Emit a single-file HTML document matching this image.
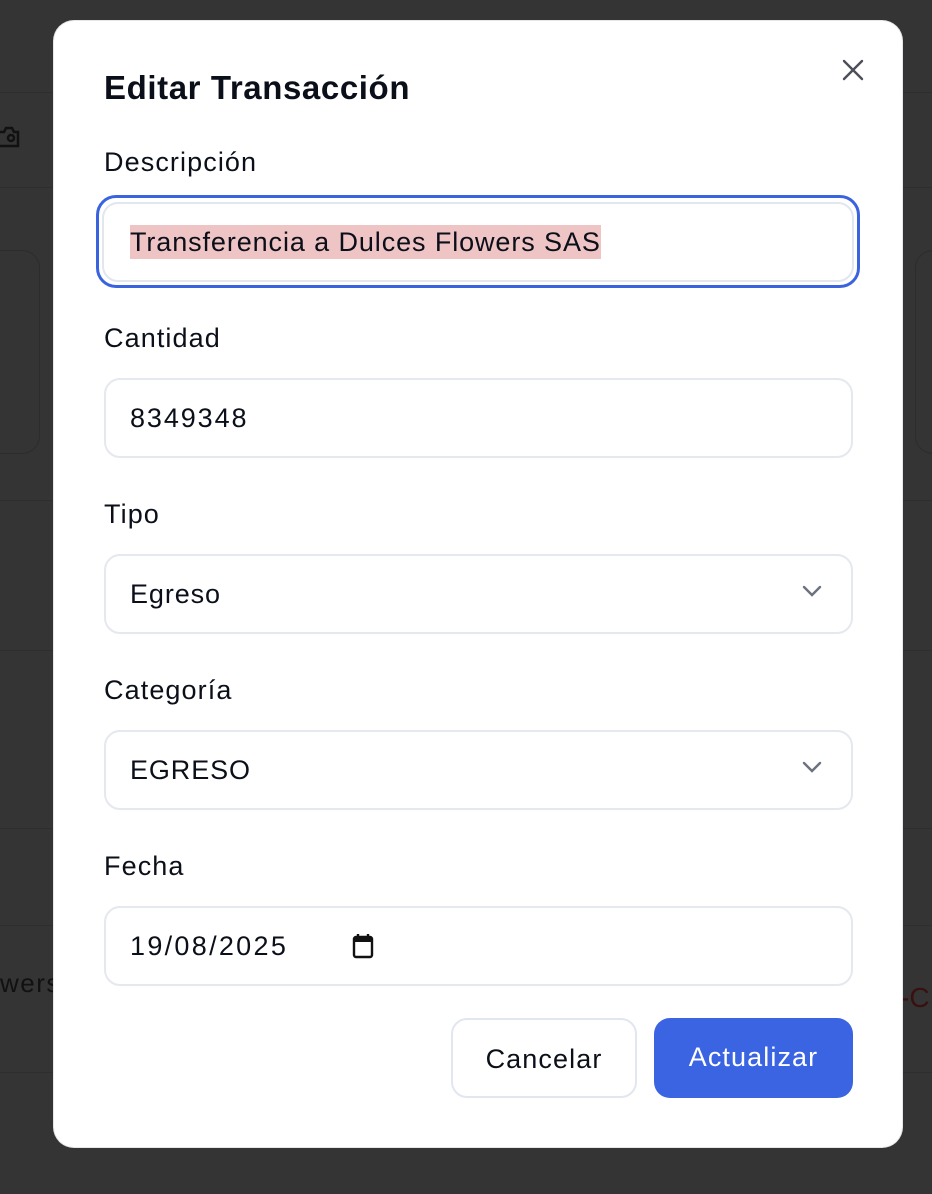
<!DOCTYPE html>
<html><head><meta charset="utf-8"><style>
*{box-sizing:border-box;margin:0;padding:0}
body{width:932px;height:1194px;background:#343434;font-family:"Liberation Sans",sans-serif;position:relative;overflow:hidden;color:#0b0f19}
.bgl{position:absolute;left:0;right:0;height:1px;background:#2e2e2e}
.modal{position:absolute;left:54px;top:21px;width:848px;height:1126px;background:#fff;border-radius:20px;box-shadow:0 0 0 1px #e3e6ea}
h1{position:absolute;left:50px;top:48px;font-size:33px;font-weight:bold;letter-spacing:0.6px}
.lab{position:absolute;left:50px;font-size:27px;color:#0b0f19;letter-spacing:1.1px}
.inp{position:absolute;left:50px;width:749px;height:80px;border:2px solid #e5e8ee;border-radius:16px;font-size:27px;padding-left:24px;line-height:76px;letter-spacing:0.9px}
.chev{position:absolute;right:28px;top:28px}
.x{position:absolute;left:786px;top:36px}
.btn{position:absolute;top:997px;height:80px;border-radius:16px;font-size:27px;text-align:center;line-height:78px;letter-spacing:1.1px}
</style></head><body>
<div class="bgl" style="top:92px"></div>
<div class="bgl" style="top:187px"></div>
<div class="bgl" style="top:500px"></div>
<div class="bgl" style="top:650px"></div>
<div class="bgl" style="top:828px"></div>
<div class="bgl" style="top:925px"></div>
<div class="bgl" style="top:1072px"></div>
<div style="position:absolute;left:-30px;top:250px;width:70px;height:204px;border:1px solid #2c2c2c;border-radius:18px"></div>
<div style="position:absolute;left:915px;top:250px;width:70px;height:204px;border:1px solid #2c2c2c;border-radius:18px"></div>
<div style="position:absolute;left:0;top:968px;font-size:26px;color:#111;letter-spacing:1.5px">wers</div>
<div style="position:absolute;left:900px;top:982px;font-size:28px;color:#3a0f0f;white-space:nowrap">-C</div>
<svg style="position:absolute;left:0;top:124px" width="26" height="28" viewBox="0 0 26 28"><path d="M-4 8h8l2-4h6l2 4h4v14H-4z" fill="none" stroke="#111" stroke-width="2.5"/><circle cx="11" cy="14" r="3" fill="none" stroke="#111" stroke-width="2.5"/></svg>
<div class="modal">
<h1>Editar Transacción</h1>
<svg class="x" width="26" height="26" viewBox="0 0 26 26"><path d="M4 4L22 22M22 4L4 22" stroke="#4a4f58" stroke-width="2.4" stroke-linecap="round"/></svg>
<div class="lab" style="top:126px">Descripción</div>
<div style="position:absolute;left:42px;top:174px;width:764px;height:93px;border:3px solid #3a63e0;border-radius:20px"></div>
<div class="inp" style="top:181px;left:48px;width:752px;height:80px;border:2px solid #e2e6ee;padding-left:26px"><span style="background:#eec4c4;line-height:34px;display:inline-block">Transferencia a Dulces Flowers SAS</span></div>
<div class="lab" style="top:302px">Cantidad</div>
<div class="inp" style="top:357px;letter-spacing:1.9px">8349348</div>
<div class="lab" style="top:478px">Tipo</div>
<div class="inp" style="top:533px">Egreso<svg class="chev" width="22" height="14" viewBox="0 0 22 14"><path d="M3 3l8 8 8-8" fill="none" stroke="#6b7280" stroke-width="2.4" stroke-linecap="round"/></svg></div>
<div class="lab" style="top:654px">Categoría</div>
<div class="inp" style="top:709px">EGRESO<svg class="chev" width="22" height="14" viewBox="0 0 22 14"><path d="M3 3l8 8 8-8" fill="none" stroke="#6b7280" stroke-width="2.4" stroke-linecap="round"/></svg></div>
<div class="lab" style="top:830px">Fecha</div>
<div class="inp" style="top:885px;letter-spacing:2.3px">19/08/2025<svg style="position:absolute;left:246px;top:25px" width="22" height="26" viewBox="0 0 22 26"><rect x="2" y="4" width="18" height="20" rx="2" fill="none" stroke="#111" stroke-width="2.4"/><rect x="2" y="4" width="18" height="5" fill="#111"/><path d="M6 1v5M16 1v5" stroke="#111" stroke-width="2.4"/></svg></div>
<div class="btn" style="left:397px;width:186px;border:2px solid #e2e6ee;background:#fff">Cancelar</div>
<div class="btn" style="left:600px;width:199px;background:#3b64e3;color:#fff">Actualizar</div>
</div>
</body></html>
